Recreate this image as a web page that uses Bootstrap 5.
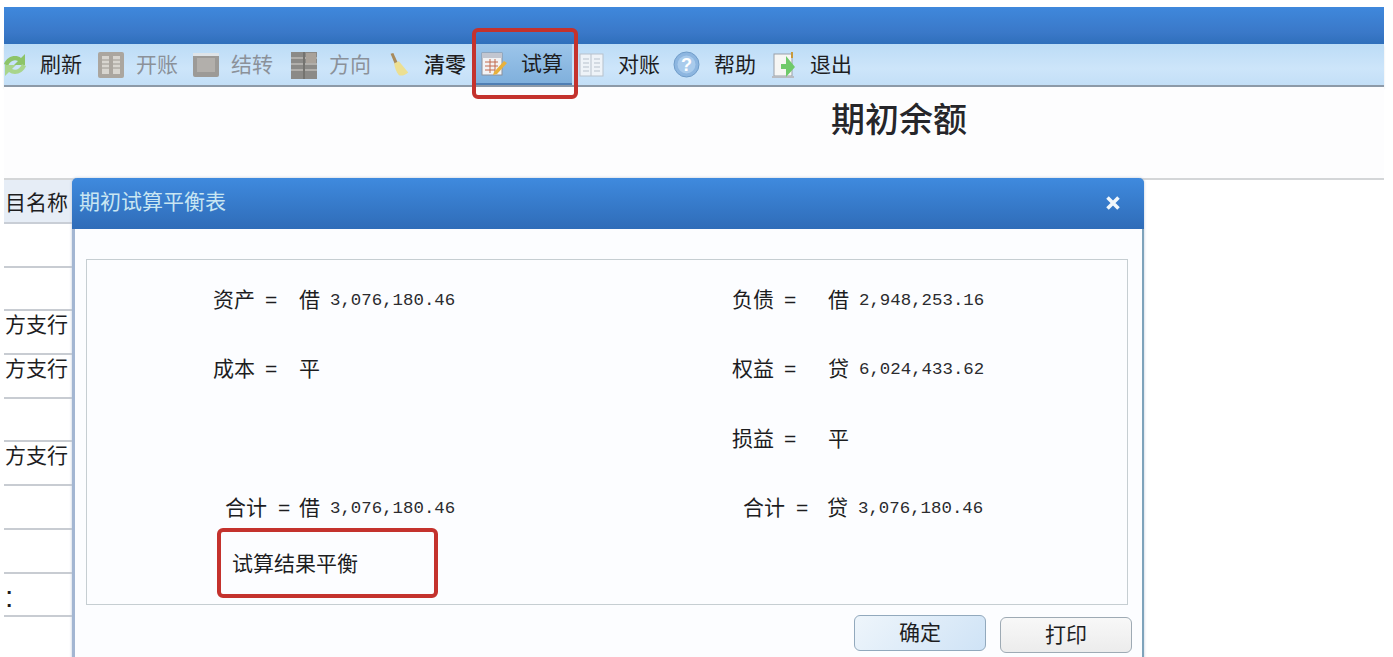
<!doctype html>
<html lang="zh-CN">

<head>
    <meta charset="utf-8">
    <meta name="viewport" content="width=device-width, initial-scale=1">
    <link href="https://cdn.jsdelivr.net/npm/bootstrap@5.3.3/dist/css/bootstrap.min.css" rel="stylesheet">
    <title>期初余额</title>
    <style>
        html, body { height: 657px; overflow: hidden; background: #fff; }
        body { font-family: "Liberation Sans", "Noto Sans CJK SC", sans-serif; color: #1d1d1f; font-size: 21px; line-height: 26px; }
        .shell { position: relative; height: 657px; padding: 7px 9px 0 4px; }
        .title-strip { height: 37px; background: linear-gradient(#3f88dc, #3a78c8 70%, #2f6fbb); }
        .tools { height: 43px; background: linear-gradient(#bcdcf6, #cde5fa 60%, #c3dff7); border-bottom: 2px solid #8d9aa8; box-shadow: 0 2px 2px #e4e6e8; }
        .tool { height: 41px; flex: none; }
        .tool svg { flex: none; display: block; }
        .tool-off { color: #8b9199; }
        .tool-on { background: linear-gradient(#9cc5ea, #80b0dc); margin: 0 7px 0 -3px; padding: 0 9px 0 5px; border-bottom: 2px solid #4f7fb4; }
        .tool-on .icon-gap-s { margin-right: 13px; }
        .tool-gap { margin-right: 15px; }
        .tool-gap-s { margin-right: 14px; }
        .tool-gap-m { margin-right: 17px; }
        .tool-gap-t { margin-right: 13px; }
        .icon-gap { margin-right: 14px; }
        .icon-gap-s { margin-right: 11px; }
        .icon-gap-b { margin-right: 13px; }
        .head-area { height: 93px; border-bottom: 2px solid #d4d6d8; background: #fdfdfe; }
        .page-name { font-size: 34px; line-height: 40px; font-weight: 500; color: #26262a; padding-top: 13px; padding-left: 827px; }
        .side-col { width: 68px; overflow: hidden; white-space: nowrap; }
        .side-head { height: 44px; background: #e6edf6; border-bottom: 2px solid #c9ced6; padding: 10px 0 0 1px; }
        .side-row { height: 43.7px; border-bottom: 2px solid #c8ccd2; padding: 1px 0 0 1px; }
        .side-colon { font-size: 30px; padding-top: 10px; }
        .dlg { position: absolute; left: 72px; top: 178px; width: 1072px; height: 490px; background: #fcfdff; border-left: 3px solid #a3b6d2; border-right: 2px solid #7ea3bb; border-radius: 5px 5px 0 0; box-shadow: 0 0 3px #b9c6d6; }
        .dlg-head { height: 51px; margin: 0 -2px 0 -3px; padding: 11px 0 0 7px; background: linear-gradient(#3f8ade, #2f6cb8); border-radius: 5px 5px 0 0; color: #c9e6f2; }
        .dlg-close { position: absolute; right: 21px; top: 17px; }
        .sheet { margin: 30px 14px 0 11px; height: 346px; border: 1px solid #c6ced2; padding-top: 5px; display: grid; grid-template-columns: 645px 1fr; grid-template-rows: 69.5px 69.5px 69.5px 69.5px 42px; align-items: center; }
        .fld { display: flex; align-items: center; padding-left: 126px; }
        .fld-r { padding-left: 0; }
        .fld-sum { padding-left: 138px; }
        .fld-sum-r { padding-left: 11px; }
        .eq { width: 12px; margin-left: 10px; text-align: center; }
        .dc { margin-left: 22px; }
        .fld-r .dc { margin-left: 32px; }
        .fld-sum .eq, .fld-sum-r .eq { margin-left: 11px; }
        .fld-sum .dc { margin-left: 9px; }
        .fld-sum-r .dc { margin-left: 19px; }
        .amt { margin-left: 10px; font-family: "Liberation Mono", monospace; font-size: 17.4px; color: #2b2b2e; position: relative; top: 1px; }
        .verdict { padding-left: 145px; }
        .dlg-foot { padding: 10px 10px 0 0; gap: 14px; }
        .dlg-btn { width: 132px; height: 36px; padding: 0; border: 1px solid #9eaab4; border-radius: 6px; font-size: 21px; line-height: 32px; color: #1d1d1f; background: linear-gradient(#f8f8f8, #ececec); margin-top: 2px; }
        .dlg-btn-main { background: linear-gradient(135deg, #eef5fb, #cfe3f6); border-color: #92a9bd; margin-top: 0; }
        .mark-box { position: absolute; border: 4px solid #c4322d; border-radius: 6px; pointer-events: none; }
        .mark-tool { left: 472px; top: 28px; width: 106px; height: 71px; }
        .mark-result { left: 217px; top: 528px; width: 221px; height: 70px; }
    </style>
</head>

<body>
    <div class="shell">
        <div class="title-strip"></div>
        <div class="tools d-flex align-items-center">
            <div class="tool d-flex align-items-center tool-gap">
                <svg class="icon-gap" width="22" height="28" viewBox="0 0 22 28"><path d="M0 13 C3 5 12 3 17 7 L21 3 L21 14 L10 14 L14 10 C10 8 6 10 4 15 Z" fill="#8dc468"/><path d="M22 15 C19 23 10 25 5 21 L1 25 L1 14 L12 14 L8 18 C12 20 16 18 18 13 Z" fill="#a9d58c"/></svg>
                <span>刷新</span>
            </div>
            <div class="tool tool-off d-flex align-items-center tool-gap-s">
                <svg class="icon-gap-s" width="28" height="28" viewBox="0 0 28 28"><rect x="1" y="1" width="26" height="26" rx="2" fill="#aba69f"/><path d="M5 5h7v18H5zM16 5h7v18h-7z" fill="#d8d5cf"/><path d="M5 9h7M5 13h7M5 17h7M16 9h7M16 13h7M16 17h7" stroke="#9d9992"/></svg>
                <span>开账</span>
            </div>
            <div class="tool tool-off d-flex align-items-center tool-gap-m">
                <svg class="icon-gap-s" width="28" height="28" viewBox="0 0 28 28"><rect x="1" y="2" width="26" height="24" rx="2" fill="#9c9a97"/><rect x="1" y="2" width="26" height="3" fill="#dfe4e8"/><rect x="5" y="7" width="18" height="14" fill="#b2afab"/></svg>
                <span>结转</span>
            </div>
            <div class="tool tool-off d-flex align-items-center tool-gap-s">
                <svg class="icon-gap-s" width="28" height="28" viewBox="0 0 28 28"><rect x="1" y="1" width="26" height="27" fill="#8b8a87"/><path d="M1 7h26M1 13h26M1 19h26" stroke="#b0aeaa" stroke-width="2"/><path d="M14 1v27" stroke="#74736f" stroke-width="2"/><rect x="16" y="2" width="10" height="10" fill="#a9a29a"/></svg>
                <span>方向</span>
            </div>
            <div class="tool d-flex align-items-center tool-gap-t">
                <svg class="icon-gap-b" width="26" height="28" viewBox="0 0 28 28"><path d="M6 2l3-1 5 11-3 2z" fill="#a88a5c"/><path d="M10 12l5-2 10 12c-3 3-7 4-10 3-3-4-5-9-5-13z" fill="#ecdf92"/></svg>
                <span class="fw-medium">清零</span>
            </div>
            <div class="tool tool-on d-flex align-items-center">
                <svg class="icon-gap-s" width="27" height="26" viewBox="0 0 27 26"><rect x="1" y="2" width="20" height="22" fill="#f2f3f5" stroke="#8b8f9a"/><rect x="1" y="2" width="20" height="5" fill="#c2c6d0"/><path d="M4 11h13M4 15h13M4 19h10M9 8v14M14 8v14" stroke="#c26b4e"/><path d="M13 21l10-11 3 2-10 11-4 1z" fill="#e8b13c"/></svg>
                <span>试算</span>
            </div>
            <div class="tool d-flex align-items-center tool-gap-t">
                <svg class="icon-gap" width="25" height="26" viewBox="0 0 25 26"><rect x="1" y="2" width="23" height="22" fill="#eef3f8" stroke="#b7c1cc"/><path d="M12 2v22M4 7h6M4 11h6M4 15h6M4 19h6M15 7h6M15 11h6M15 15h6M15 19h6" stroke="#b7c1cc"/></svg>
                <span>对账</span>
            </div>
            <div class="tool d-flex align-items-center tool-gap">
                <svg class="icon-gap" width="27" height="27" viewBox="0 0 27 27"><circle cx="13.5" cy="13.5" r="12.5" fill="#8db6e0" stroke="#6f9cc9"/><circle cx="13.5" cy="13.5" r="9" fill="#a9cbec"/><text x="13.5" y="20" text-anchor="middle" font-size="18" font-family="Liberation Sans" fill="#fff" font-weight="700">?</text></svg>
                <span>帮助</span>
            </div>
            <div class="tool d-flex align-items-center">
                <svg class="icon-gap-s" width="28" height="28" viewBox="0 0 28 28"><rect x="3" y="3" width="18" height="22" fill="#f6f6f4" stroke="#99a0a8"/><path d="M1 26h22" stroke="#b8bcc2" stroke-width="2"/><path d="M19 2v8h5v5h-5v8l-9-10z" fill="#6fca6a" transform="matrix(-1 0 0 1 34 3)"/><path d="M21 1v6" stroke="#c89a3c" stroke-width="2"/></svg>
                <span>退出</span>
            </div>
        </div>
        <div class="head-area">
            <div class="page-name">期初余额</div>
        </div>
        <div class="side-col">
            <div class="side-head">目名称</div>
            <div class="side-row"></div>
            <div class="side-row"></div>
            <div class="side-row">方支行</div>
            <div class="side-row">方支行</div>
            <div class="side-row"></div>
            <div class="side-row">方支行</div>
            <div class="side-row"></div>
            <div class="side-row"></div>
            <div class="side-row side-colon">:</div>
        </div>

        <div class="dlg">
            <div class="dlg-head">期初试算平衡表
                <svg class="dlg-close" width="16" height="16" viewBox="0 0 16 16"><path d="M2.5 2.5l11 11M13.5 2.5l-11 11" stroke="#f1f7fb" stroke-width="3.6"/></svg>
            </div>
            <div class="sheet">
                <div class="fld"><span>资产</span><span class="eq">=</span><span class="dc">借</span><span class="amt">3,076,180.46</span></div>
                <div class="fld fld-r"><span>负债</span><span class="eq">=</span><span class="dc">借</span><span class="amt">2,948,253.16</span></div>
                <div class="fld"><span>成本</span><span class="eq">=</span><span class="dc">平</span></div>
                <div class="fld fld-r"><span>权益</span><span class="eq">=</span><span class="dc">贷</span><span class="amt">6,024,433.62</span></div>
                <div></div>
                <div class="fld fld-r"><span>损益</span><span class="eq">=</span><span class="dc">平</span></div>
                <div class="fld fld-sum"><span>合计</span><span class="eq">=</span><span class="dc">借</span><span class="amt">3,076,180.46</span></div>
                <div class="fld fld-sum-r"><span>合计</span><span class="eq">=</span><span class="dc">贷</span><span class="amt">3,076,180.46</span></div>
                <div class="verdict">试算结果平衡</div>
                <div></div>
            </div>
            <div class="dlg-foot d-flex justify-content-end">
                <button type="button" class="btn dlg-btn dlg-btn-main">确定</button>
                <button type="button" class="btn dlg-btn">打印</button>
            </div>
        </div>

        <div class="mark-box mark-tool"></div>
        <div class="mark-box mark-result"></div>
    </div>

    <script src="https://cdn.jsdelivr.net/npm/bootstrap@5.3.3/dist/js/bootstrap.bundle.min.js"></script>
</body>

</html>
